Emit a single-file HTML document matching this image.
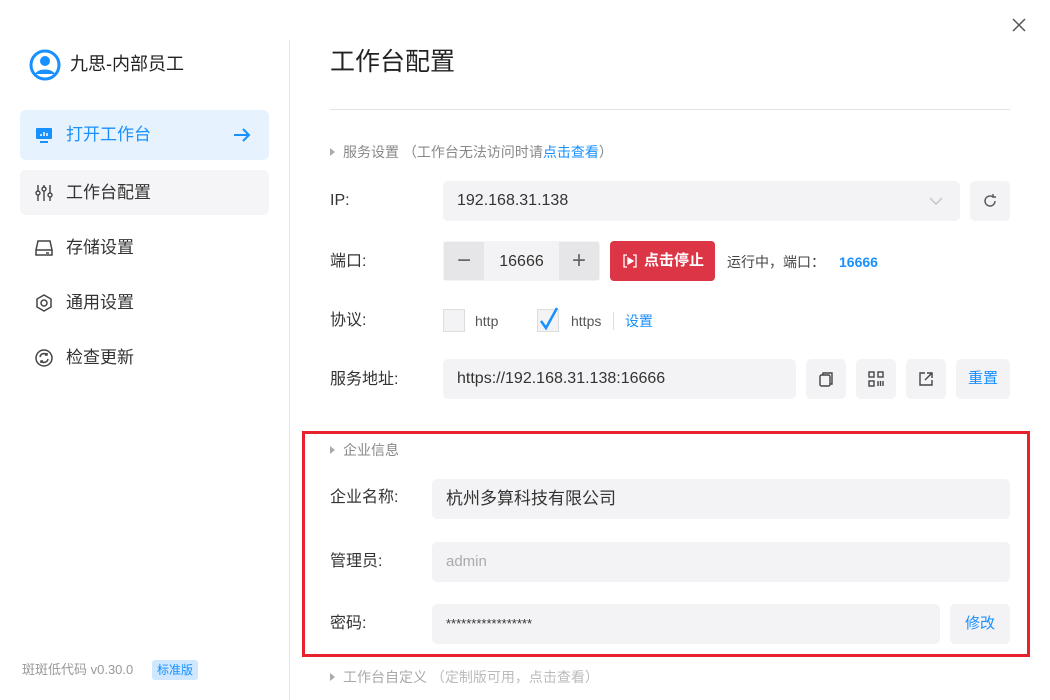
<!DOCTYPE html>
<html><head><meta charset="utf-8"><style>
*{box-sizing:border-box;margin:0;padding:0}
body{width:1050px;height:700px;overflow:hidden;background:#fff;font-family:"Liberation Sans","Noto Sans CJK SC",sans-serif;color:#333;position:relative;line-height:20px}
.abs{position:absolute}
.side{position:absolute;left:0;top:0;width:289px;height:700px}
.nav{position:absolute;left:20px;width:249px;height:45px;border-radius:6px;font-size:17px;display:flex;align-items:center;padding-left:14px;color:#333}
.nav svg{margin-right:12px}
.lbl{position:absolute;left:330px;font-size:16px;color:#333;line-height:20px}
.box{position:absolute;background:#f3f3f5;border-radius:5px;font-size:16px;display:flex;align-items:center;padding-left:14px;color:#333}
.ib{position:absolute;background:#f3f3f5;border-radius:5px;width:40px;height:40px;display:flex;align-items:center;justify-content:center}
.sec{position:absolute;left:330px;font-size:14px;color:#888}
.sec:before{content:"";display:inline-block;border-left:5px solid #aaa;border-top:4px solid transparent;border-bottom:4px solid transparent;margin-right:8px;vertical-align:1px}
</style></head><body>
<div class="abs" style="left:289px;top:40px;width:1px;height:660px;background:#e6e6e6"></div>
<div class="side">
 <svg class="abs" style="left:29px;top:49px" width="32" height="32" viewBox="0 0 32 32"><circle cx="16" cy="16" r="14" fill="none" stroke="#1890ff" stroke-width="3"/><circle cx="16" cy="12" r="5" fill="#1890ff"/><path d="M6 25c3-6 17-6 20 0" fill="#1890ff"/></svg>
 <div class="abs" style="left:70px;top:54px;font-size:18px;color:#222">九思-内部员工</div>
 <div class="nav" style="top:110px;height:50px;background:#e6f3ff;color:#1890ff">
  <svg width="20" height="20" viewBox="0 0 20 20"><rect x="2" y="3" width="16" height="11" rx="1" fill="#1890ff"/><rect x="6" y="16" width="8" height="2" fill="#1890ff"/><path d="M7 11V9M10 11V7M13 11V8" stroke="#fff" stroke-width="1.5"/></svg>打开工作台
  <svg class="abs" style="left:212px;top:16px" width="20" height="18" viewBox="0 0 20 18"><path d="M2 9h15M11 3l6 6-6 6" fill="none" stroke="#1890ff" stroke-width="2"/></svg></div>
 <div class="nav" style="top:170px;background:#f5f5f7">
  <svg width="20" height="20" viewBox="0 0 20 20" fill="none" stroke="#444" stroke-width="1.4"><path d="M4 2v6M4 12v6M10 2v2M10 8v10M16 2v8M16 14v4"/><circle cx="4" cy="10" r="2"/><circle cx="10" cy="6" r="2"/><circle cx="16" cy="12" r="2"/></svg>工作台配置</div>
 <div class="nav" style="top:225px"><svg width="20" height="20" viewBox="0 0 20 20" fill="none" stroke="#444" stroke-width="1.5"><path d="M4 3h12l2 9v5H2v-5z M2 12h16"/><path d="M12 15h3"/></svg>存储设置</div>
 <div class="nav" style="top:280px"><svg width="20" height="20" viewBox="0 0 20 20" fill="none" stroke="#444" stroke-width="1.5"><path d="M10 2l7 4v8l-7 4-7-4V6z"/><circle cx="10" cy="10" r="3"/></svg>通用设置</div>
 <div class="nav" style="top:335px"><svg width="20" height="20" viewBox="0 0 20 20" fill="none" stroke="#444" stroke-width="1.5"><circle cx="10" cy="10" r="8"/><path d="M6 9a4 4 0 0 1 7-2M14 11a4 4 0 0 1-7 2"/><path d="M13 5v2h-2M7 15v-2h2"/></svg>检查更新</div>
 <div class="abs" style="left:22px;top:660px;font-size:13px;color:#999">斑斑低代码 v0.30.0</div>
 <div class="abs" style="left:152px;top:660px;font-size:12px;line-height:16px;color:#1890ff;background:#cfe8ff;border-radius:3px;padding:2px 5px">标准版</div>
</div>
<svg class="abs" style="left:1011px;top:17px" width="16" height="16" viewBox="0 0 16 16"><path d="M2 2l12 12M14 2L2 14" stroke="#555" stroke-width="1.5"/></svg>
<div class="abs" style="left:330px;top:48px;font-size:25px;line-height:28px;color:#222">工作台配置</div>
<div class="abs" style="left:330px;top:109px;width:680px;height:1px;background:#e3e3e3"></div>
<div class="sec" style="top:142px">服务设置 （工作台无法访问时请<span style="color:#1890ff">点击查看</span>）</div>
<div class="lbl" style="top:191px">IP:</div>
<div class="box" style="left:443px;top:181px;width:517px;height:40px">192.168.31.138<svg class="abs" style="left:486px;top:15px" width="14" height="10" viewBox="0 0 14 10"><path d="M1 2l6 6 6-6" fill="none" stroke="#bbb" stroke-width="1.2"/></svg></div>
<div class="ib" style="left:970px;top:181px"><svg width="16" height="16" viewBox="0 0 16 16" fill="none" stroke="#555" stroke-width="1.4"><path d="M13 8a5 5 0 1 1-2-4M11 1v3h3"/></svg></div>
<div class="lbl" style="top:252px">端口:</div>
<div class="abs" style="left:443px;top:241px;width:157px;height:40px;background:#f3f3f5;border-radius:4px"></div>
<div class="abs" style="left:444px;top:242px;width:40px;height:38px;background:#e6e6e8;display:flex;align-items:center;justify-content:center;font-size:24px;color:#666">−</div>
<div class="abs" style="left:559px;top:242px;width:40px;height:38px;background:#e6e6e8;display:flex;align-items:center;justify-content:center;font-size:24px;color:#666">+</div>
<div class="abs" style="left:484px;top:252px;width:75px;text-align:center;font-size:16px">16666</div>
<div class="abs" style="left:610px;top:241px;width:105px;height:40px;background:#dc3545;border-radius:4px;color:#fff;font-size:15px;font-weight:bold;display:flex;align-items:center;padding-left:12px"><svg width="16" height="16" viewBox="0 0 16 16" style="margin-right:6px" fill="none" stroke="#fff" stroke-width="1.3"><path d="M5 2H2v12h3M11 2h3v12h-3"/><path d="M6 5l5 3-5 3z" fill="#fff"/></svg>点击停止</div>
<div class="abs" style="left:727px;top:252px;font-size:14px;color:#444">运行中，端口：</div>
<div class="abs" style="left:839px;top:252px;font-size:14px;color:#1890ff;font-weight:bold">16666</div>
<div class="lbl" style="top:311px">协议:</div>
<div class="abs" style="left:443px;top:309px;width:22px;height:23px;background:#f3f3f5;border:1px solid #ddd"></div>
<div class="abs" style="left:475px;top:311px;font-size:14px;color:#555">http</div>
<div class="abs" style="left:537px;top:309px;width:22px;height:23px;background:#f3f3f5;border:1px solid #ddd"></div>
<svg class="abs" style="left:538px;top:306px" width="22" height="26" viewBox="0 0 22 26"><path d="M3 15l5 7L19 2" fill="none" stroke="#1890ff" stroke-width="2.5"/></svg>
<div class="abs" style="left:571px;top:311px;font-size:14px;color:#555">https</div>
<div class="abs" style="left:613px;top:312px;width:1px;height:18px;background:#ddd"></div>
<div class="abs" style="left:625px;top:311px;font-size:14px;color:#1890ff">设置</div>
<div class="lbl" style="top:370px">服务地址:</div>
<div class="box" style="left:443px;top:359px;width:353px;height:40px">https://192.168.31.138:16666</div>
<div class="ib" style="left:806px;top:359px"><svg width="18" height="18" viewBox="0 0 18 18" fill="none" stroke="#444" stroke-width="1.4"><rect x="3" y="5" width="10" height="11" rx="1.5"/><path d="M6 5V3h9v11h-2"/></svg></div>
<div class="ib" style="left:856px;top:359px"><svg width="18" height="18" viewBox="0 0 18 18" fill="none" stroke="#444" stroke-width="1.4"><rect x="2" y="2" width="5" height="5"/><rect x="11" y="2" width="5" height="5"/><rect x="2" y="11" width="5" height="5"/><path d="M11 11v5M13.5 11v5M16 11v5"/></svg></div>
<div class="ib" style="left:906px;top:359px"><svg width="18" height="18" viewBox="0 0 18 18" fill="none" stroke="#444" stroke-width="1.4"><path d="M8 3H3v12h12v-5M10 3h5v5M15 3l-7 7"/></svg></div>
<div class="ib" style="left:956px;top:359px;width:54px;color:#1890ff;font-size:15px">重置</div>
<div class="abs" style="left:302px;top:431px;width:728px;height:226px;border:3px solid #e8222b"></div>
<div class="sec" style="top:440px">企业信息</div>
<div class="lbl" style="top:488px">企业名称:</div>
<div class="box" style="left:432px;top:479px;width:578px;height:40px;font-size:17px">杭州多算科技有限公司</div>
<div class="lbl" style="top:552px">管理员:</div>
<div class="box" style="left:432px;top:542px;width:578px;height:40px;color:#aaa;font-size:15px">admin</div>
<div class="lbl" style="top:614px">密码:</div>
<div class="box" style="left:432px;top:604px;width:508px;height:40px;font-size:13px">*****************</div>
<div class="ib" style="left:950px;top:604px;width:60px;color:#1890ff;font-size:15px">修改</div>
<div class="sec" style="top:667px;color:#aaa">工作台自定义 <span style="color:#bbb">（定制版可用，点击查看）</span></div>
</body></html>
